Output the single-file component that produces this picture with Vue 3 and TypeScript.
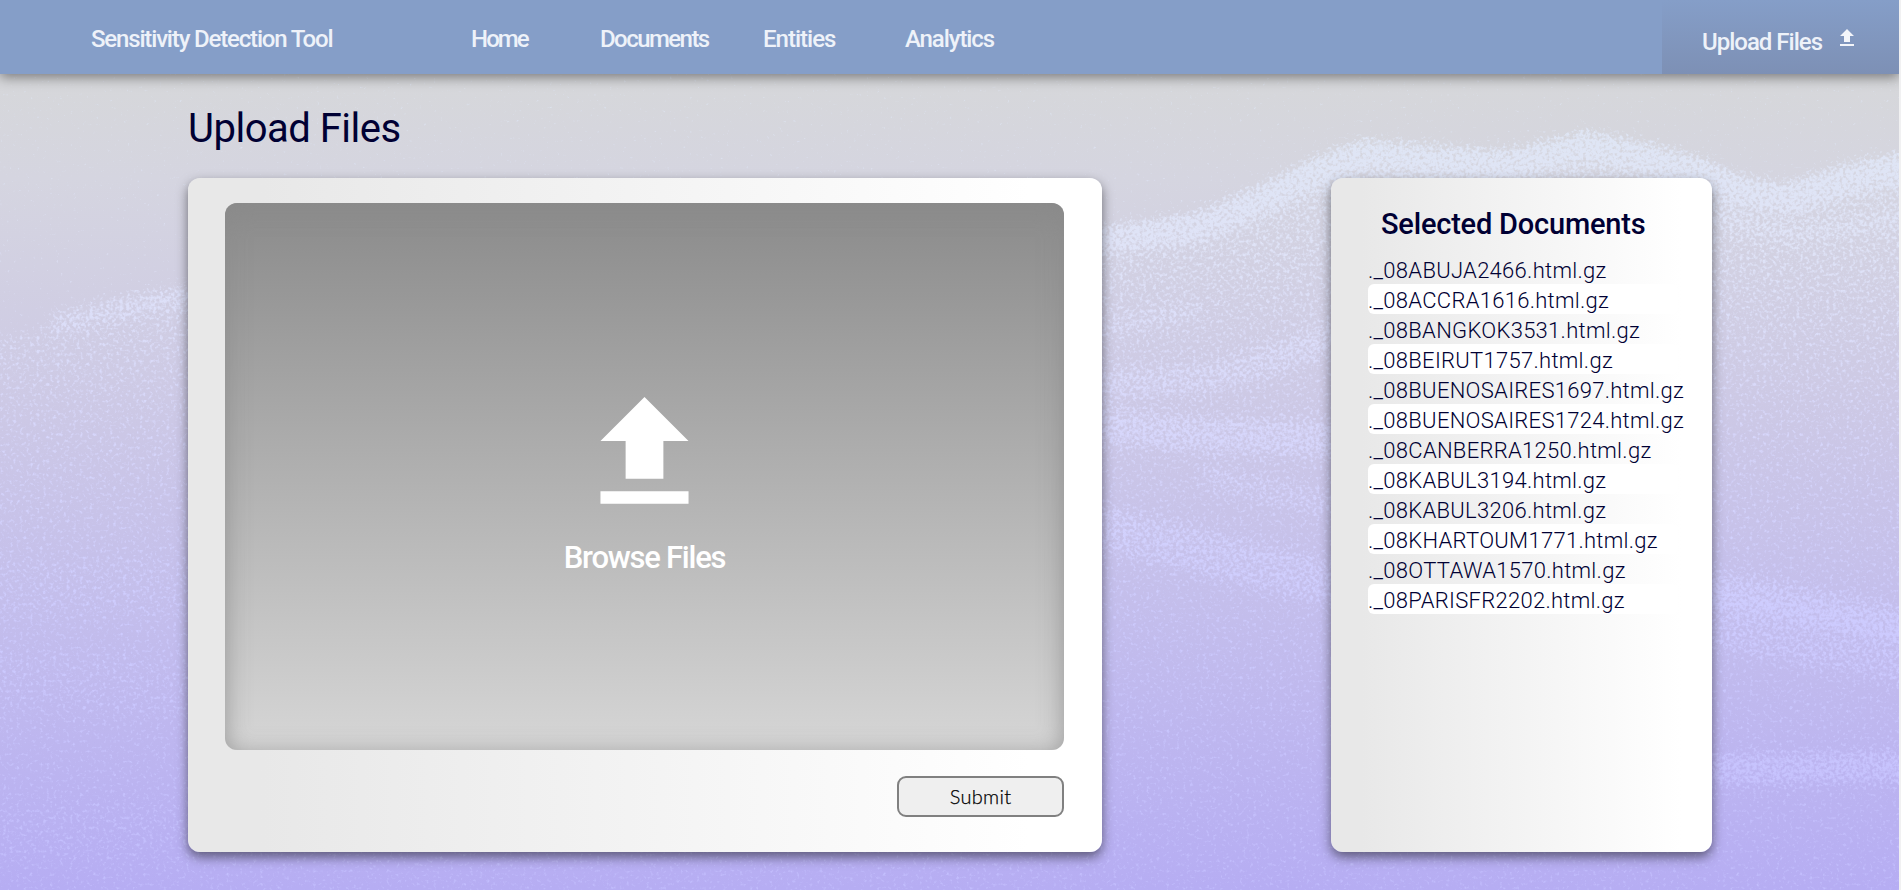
<script setup lang="ts">
interface NavLink {
  label: string
  slug: string
}

const links: NavLink[] = [
  { label: 'Home', slug: 'home' },
  { label: 'Documents', slug: 'documents' },
  { label: 'Entities', slug: 'entities' },
  { label: 'Analytics', slug: 'analytics' },
]

const files: string[] = [
  '._08ABUJA2466.html.gz',
  '._08ACCRA1616.html.gz',
  '._08BANGKOK3531.html.gz',
  '._08BEIRUT1757.html.gz',
  '._08BUENOSAIRES1697.html.gz',
  '._08BUENOSAIRES1724.html.gz',
  '._08CANBERRA1250.html.gz',
  '._08KABUL3194.html.gz',
  '._08KABUL3206.html.gz',
  '._08KHARTOUM1771.html.gz',
  '._08OTTAWA1570.html.gz',
  '._08PARISFR2202.html.gz',
]

const uploadPath = 'M5 20h14v-2H5v2zm0-10h4v6h6v-6h4l-7-7-7 7z'
</script>

<template>
  <div class="page">
    <svg class="backdrop" viewBox="0 0 1899 890" preserveAspectRatio="none" aria-hidden="true">
      <defs>
        <linearGradient id="snow" x1="0" y1="0" x2="0" y2="1">
          <stop offset="0.13" stop-color="#dfe6f4" />
          <stop offset="0.28" stop-color="#dfe3f7" />
          <stop offset="0.48" stop-color="#d7d7fb" />
          <stop offset="0.7" stop-color="#cdcbfe" />
          <stop offset="1" stop-color="#c2bdfd" />
        </linearGradient>
        <linearGradient id="slope" x1="0" y1="0" x2="0" y2="1">
          <stop offset="0" stop-color="#fff" stop-opacity="0.52" />
          <stop offset="0.35" stop-color="#fff" stop-opacity="0.3" />
          <stop offset="1" stop-color="#fff" stop-opacity="0.22" />
        </linearGradient>
        <filter id="grain" filterUnits="userSpaceOnUse" x="-60" y="0" width="2020" height="950" color-interpolation-filters="sRGB">
          <feGaussianBlur in="SourceGraphic" stdDeviation="6" result="soft" />
          <feTurbulence type="fractalNoise" baseFrequency="0.3" numOctaves="2" seed="8" />
          <feColorMatrix values="0 0 0 0 1  0 0 0 0 1  0 0 0 0 1  1 0 0 0 0" result="noise" />
          <feComposite in="soft" in2="noise" operator="arithmetic" k1="0" k2="2" k3="3.4" k4="-2.38" />
          <feGaussianBlur stdDeviation="0.55" />
        </filter>
        <mask id="ridges" maskUnits="userSpaceOnUse" x="0" y="0" width="1899" height="890">
          <g filter="url(#grain)">
            <path fill="url(#slope)" d="M-50 355 40 323 110 300 188 284 400 260 700 250 900 245 1110 228 1200 210 1260 183 1320 153 1364 137 1418 143 1503 150 1588 128 1650 142 1700 155 1740 173 1780 181 1840 163 1940 141V940H-50Z" />
            <g fill="none" stroke="#fff">
              <path stroke-width="26" stroke-opacity="0.36" d="M50 322 110 308 200 293" />
              <path stroke-width="32" stroke-opacity="0.58" d="M1090 240 1200 226 1260 200 1320 170 1364 154 1418 158 1503 164 1588 146 1650 158 1700 172 1740 190 1790 198 1850 178 1940 160" />
              <path stroke-width="18" stroke-opacity="0.3" d="M1090 330 1200 310M1712 215 1790 235 1940 215" />
              <path stroke-width="30" stroke-opacity="0.38" d="M1090 385 1200 380 1260 365 1350 330" />
              <path stroke-width="36" stroke-opacity="0.48" d="M1090 425 1200 435 1350 440" />
              <path stroke-width="26" stroke-opacity="0.3" d="M1200 475 1350 510" />
              <path stroke-width="46" stroke-opacity="0.4" d="M1090 525 1200 552 1350 588" />
              <path stroke-width="36" stroke-opacity="0.44" d="M1690 584 1780 600 1940 632" />
              <path stroke-width="60" stroke-opacity="0.34" d="M1690 615 1780 632 1940 660" />
              <path stroke-width="32" stroke-opacity="0.54" d="M1690 770 1940 766" />
              <path stroke-width="60" stroke-opacity="0.13" d="M-50 590 200 585M-50 675 200 690M-50 835 200 830" />
            </g>
          </g>
        </mask>
      </defs>
      <rect width="1899" height="890" fill="url(#snow)" mask="url(#ridges)" />
    </svg>

    <header class="nav">
      <div class="brand">Sensitivity Detection Tool</div>
      <nav class="links">
        <a v-for="link in links" :key="link.slug" :class="['link', link.slug]">{{ link.label }}</a>
      </nav>
      <a class="upload-tab">
        <span class="upload-label">Upload Files</span>
        <svg class="upload-icon" viewBox="0 0 24 24"><path :d="uploadPath" /></svg>
      </a>
    </header>

    <main class="content">
      <h1 class="heading">Upload Files</h1>
      <div class="cards">
        <section class="card upload-card">
          <div class="dropzone">
            <svg class="drop-icon" viewBox="0 0 24 24"><path :d="uploadPath" /></svg>
            <span class="browse">Browse Files</span>
          </div>
          <button class="submit" type="button">Submit</button>
        </section>
        <section class="card selected-card">
          <h2 class="selected-title">Selected Documents</h2>
          <ul class="files">
            <li v-for="file in files" :key="file" class="file">{{ file }}</li>
          </ul>
        </section>
      </div>
    </main>
  </div>
</template>

<style>
body {
  margin: 0;
  background: #f1f1f2;
  overflow: hidden;
}
</style>

<style scoped>
.page {
  position: relative;
  width: calc(100vw - 2px);
  height: 100vh;
  overflow: hidden;
  background: linear-gradient(#d6d7da 9%, #d5d5e0 20%, #cdc9e5 45%, #c3bdec 70%, #b6adf3 100%);
  font-family: Roboto, "Liberation Sans", sans-serif;
  color: #000033;
}

.backdrop {
  position: absolute;
  inset: 0;
  width: 100%;
  height: 100%;
}

.nav {
  position: relative;
  display: flex;
  height: 74px;
  background: #859ec8;
  box-shadow: 0 3px 12px rgba(0, 0, 0, 0.45);
  color: #eef2f9;
  font-size: 24px;
  font-weight: 500;
  line-height: 78px;
  white-space: nowrap;
}

.brand {
  width: 380px;
  padding-left: 91px;
  letter-spacing: -1.17px;
}

.links {
  display: flex;
  flex: 1;
  letter-spacing: -1.1px;
}

.home {
  width: 129px;
  letter-spacing: -1.9px;
}

.documents {
  width: 163px;
  letter-spacing: -1.55px;
}

.entities {
  width: 142px;
  letter-spacing: -1px;
}

.upload-tab {
  display: flex;
  box-sizing: border-box;
  width: 237px;
  padding-left: 40px;
  background: linear-gradient(#859ec8, #7d90b5);
  line-height: 84px;
}

.upload-label {
  width: 133px;
  letter-spacing: -1px;
}

.upload-icon {
  width: 24px;
  height: 24px;
  margin-top: 26px;
  fill: #f3f5fa;
}

.content {
  position: relative;
  padding: 30px 187px 0 188px;
}

.heading {
  height: 74px;
  margin: 0;
  font-size: 40px;
  font-weight: 400;
  line-height: 49px;
  letter-spacing: -0.5px;
}

.cards {
  display: flex;
  justify-content: space-between;
}

.card {
  box-sizing: border-box;
  height: 674px;
  border-radius: 12px;
  background: linear-gradient(90deg, #e8e8e8 8%, #fff 92%);
  box-shadow: 0 5px 12px rgba(0, 0, 0, 0.5);
}

.upload-card {
  display: flex;
  flex-direction: column;
  align-items: flex-end;
  width: 914px;
  padding: 25px 38px 0 37px;
}

.dropzone {
  display: flex;
  flex-direction: column;
  align-items: center;
  box-sizing: border-box;
  width: 100%;
  height: 547px;
  padding-top: 175px;
  border-radius: 12px;
  background: linear-gradient(#8b8b8b, #d6d6d6);
  box-shadow: inset 0 5px 24px rgba(139, 139, 139, 0.85);
}

.drop-icon {
  width: 151px;
  height: 151px;
  fill: #fff;
}

.browse {
  margin-top: 9px;
  color: #fff;
  font-size: 31px;
  font-weight: 500;
  line-height: 40px;
  letter-spacing: -1.25px;
}

.submit {
  width: 167px;
  height: 41px;
  margin: 26px 0 0;
  padding: 0 0 2px;
  border: 2px solid #808080;
  border-radius: 9px;
  background: #efefef;
  color: #000;
  font: 300 20px Lato, sans-serif;
  letter-spacing: 0.3px;
  -webkit-text-stroke: 0.25px #000;
}

.selected-card {
  width: 381px;
  padding: 25px 34px 0 37px;
}

.selected-title {
  height: 51px;
  margin: 0;
  padding-left: 13px;
  font-size: 29px;
  font-weight: 500;
  line-height: 43px;
  letter-spacing: -0.2px;
  white-space: nowrap;
}

.files {
  margin: 0;
  padding: 0;
  list-style: none;
}

.file {
  height: 30px;
  border-radius: 6px;
  font-size: 22px;
  font-weight: 300;
  line-height: 34px;
  letter-spacing: 0.29px;
  white-space: nowrap;
}

.file:nth-child(even) {
  background: #fff;
}
</style>
